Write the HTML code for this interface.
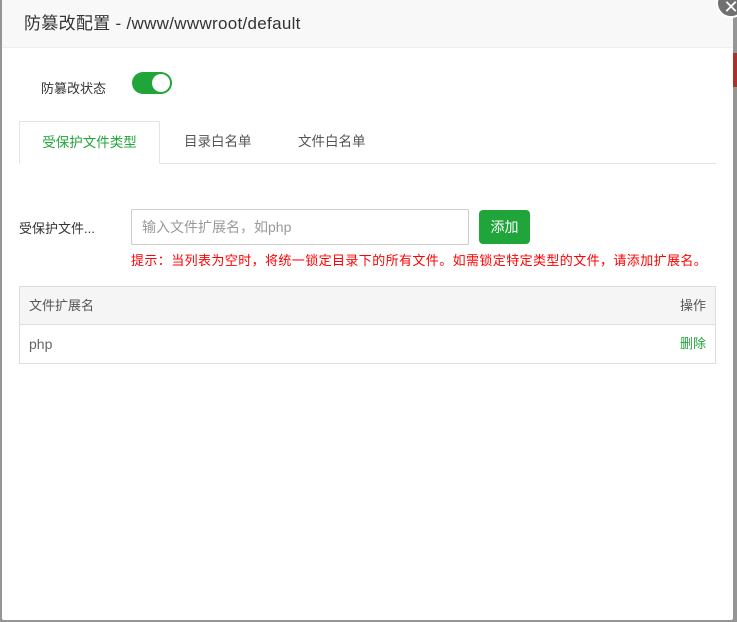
<!DOCTYPE html>
<html><head><meta charset="utf-8"><style>
body{margin:0;width:737px;height:622px;background:#959595;position:relative;overflow:hidden;font-family:"Liberation Sans","Noto Sans CJK SC",sans-serif;}
.dlg{position:absolute;left:2px;top:0;width:731px;height:620px;background:#fff;border-radius:2px;}
.hd{height:47px;background:#f8f8f8;border-bottom:1px solid #eee;font-size:17px;letter-spacing:0.3px;color:#333;line-height:48px;padding-left:22px;}
.red{position:absolute;left:733px;top:53px;width:4px;height:34px;background:#a8332b;}
.close{position:absolute;left:716px;top:-12px;width:26px;height:26px;border-radius:50%;background:#707070;border:2px solid #fff;color:#fff;font-size:18px;text-align:center;line-height:34px;}
.t{position:absolute;font-size:13px;color:#333;white-space:nowrap;}
.sw{position:absolute;left:130px;top:72px;width:40px;height:22px;border-radius:11px;background:#20a53a;}
.sw i{position:absolute;right:2px;top:2px;width:18px;height:18px;border-radius:50%;background:#fff;}
.tabs{position:absolute;left:17px;top:121px;width:697px;height:42px;border-bottom:1px solid #e4e4e4;}
.tab{position:absolute;top:0;height:42px;line-height:42px;font-size:13.5px;color:#555;}
.tab.a{left:0;width:141px;border:1px solid #e4e4e4;border-bottom:1px solid #fff;background:#fff;color:#20a53a;text-align:center;height:43px;box-sizing:border-box;}
.inp{position:absolute;left:129px;top:209px;height:34px;border:1px solid #ccc;border-radius:2px;font-size:14px;color:#999;line-height:34px;padding-left:10px;width:326px;}
.btn{position:absolute;left:477px;top:210px;width:51px;height:34px;background:#20a53a;border-radius:4px;color:#fff;font-size:14px;text-align:center;line-height:34px;}
.tip{position:absolute;left:129px;top:250px;font-size:13px;letter-spacing:0.4px;color:#f00;white-space:nowrap;}
.tbl{position:absolute;left:17px;top:286px;width:695px;height:76px;border:1px solid #ddd;}
.th{height:37px;background:#f5f5f5;border-bottom:1px solid #ddd;line-height:37px;font-size:13px;color:#555;padding:0 9px;}
.tr{height:38px;line-height:38px;font-size:14px;color:#666;padding:0 9px;}
.r{float:right;}
</style></head><body>
<div class="red"></div>
<div class="dlg">
<div class="hd">防篡改配置 - /www/wwwroot/default</div>
<div class="t" style="left:39px;top:78px">防篡改状态</div>
<div class="sw"><i></i></div>
<div class="tabs">
<div class="tab a">受保护文件类型</div>
<div class="tab" style="left:165px">目录白名单</div>
<div class="tab" style="left:279px">文件白名单</div>
</div>
<div class="t" style="left:17px;top:218px">受保护文件...</div>
<div class="inp">输入文件扩展名，如php</div>
<div class="btn">添加</div>
<div class="tip">提示：当列表为空时，将统一锁定目录下的所有文件。如需锁定特定类型的文件，请添加扩展名。</div>
<div class="tbl">
<div class="th">文件扩展名<span class="r">操作</span></div>
<div class="tr">php<span class="r" style="color:#20a53a;font-size:13px">删除</span></div>
</div>
</div>
<div class="close">✕</div>
</body></html>
